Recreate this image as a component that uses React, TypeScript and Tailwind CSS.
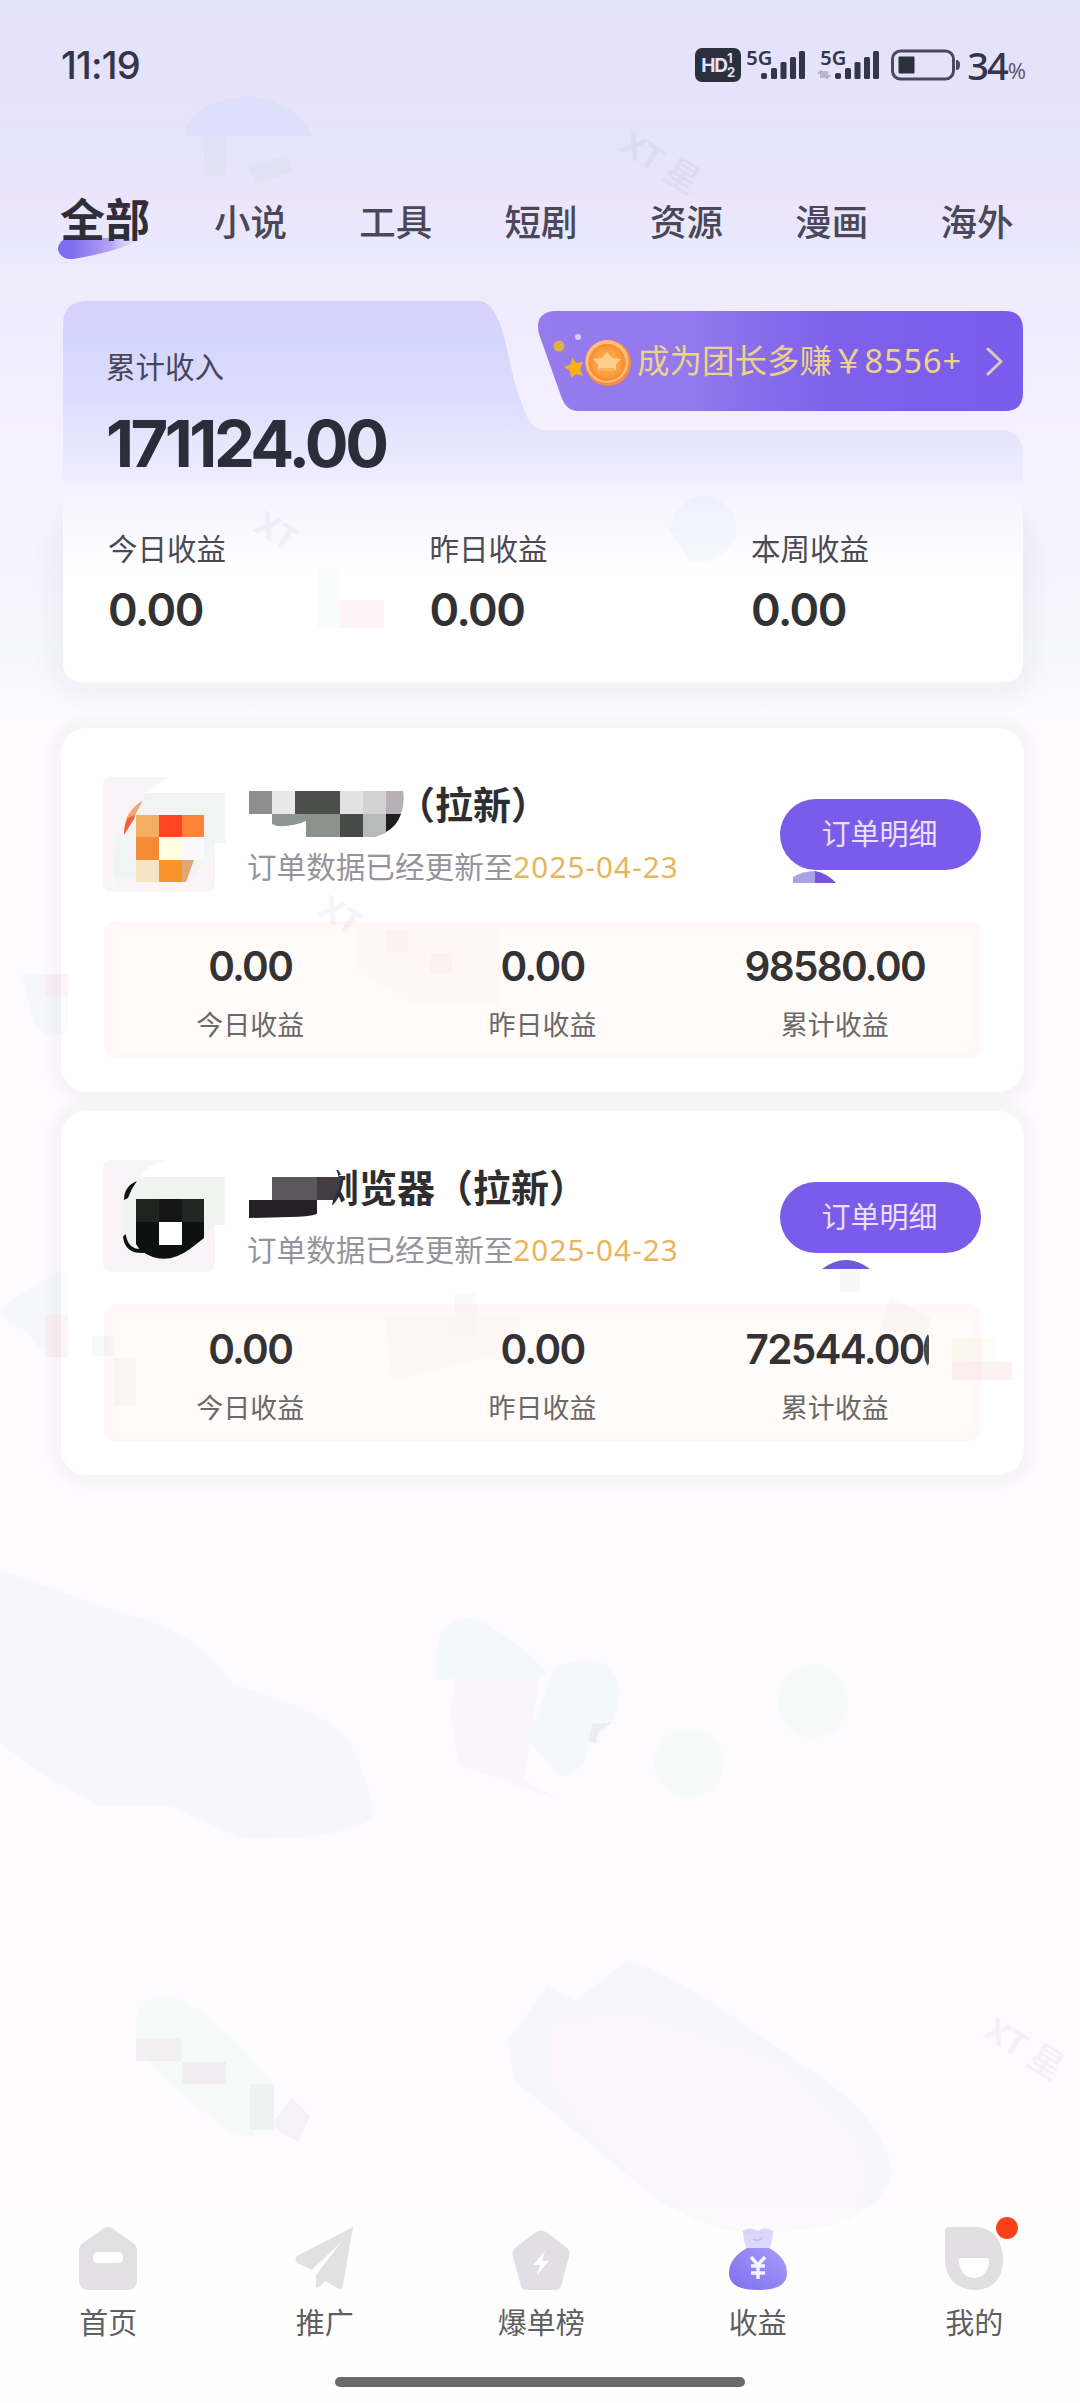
import type { ReactNode } from 'react';

interface Stat {
  label: string;
  value: string;
}

interface Order {
  id: string;
  title: string;
  updatedAt: string;
  avatar: ReactNode;
  mask: ReactNode;
  bubble: ReactNode;
  titleClass: string;
  cutDigit?: boolean;
  stats: Stat[];
}

const tabs = ['全部', '小说', '工具', '短剧', '资源', '漫画', '海外'];

const summary: Stat[] = [
  { label: '今日收益', value: '0.00' },
  { label: '昨日收益', value: '0.00' },
  { label: '本周收益', value: '0.00' },
];

function SignalBars() {
  return (
    <svg width="45" height="30" viewBox="0 0 45 30" fill="#34344a">
      <rect x="0" y="23" width="6" height="6" rx="2" />
      <rect x="10" y="18" width="6" height="11" rx="1.5" />
      <rect x="19.500" y="12" width="6" height="17" rx="1.500" />
      <rect x="29" y="7" width="6" height="22" rx="1.5" />
      <rect x="38" y="1" width="6" height="28" rx="1.5" />
    </svg>
  );
}

function StatusBar() {
  return (
    <div className="flex h-[130px] items-center justify-between pl-[61px] pr-[54px] text-[#34344a]">
      <span className="font-['Inter'] text-[38px] font-medium leading-none tracking-[-0.8px]">11:19</span>
      <div className="flex items-center">
        <div className="flex h-[34px] w-[46px] items-center justify-center rounded-[7px] bg-[#2c2f3d] font-['Inter'] text-[#e4e1fa]">
          <span className="text-[19px] font-bold leading-none tracking-[-1px]">HD</span>
          <span className="flex flex-col text-[13px] font-bold leading-[14px]">
            <span>1</span>
            <span>2</span>
          </span>
        </div>
        <div className="relative ml-[20px] h-[30px]">
          <span className="absolute -left-[15px] -top-[3px] font-['Noto_Sans'] text-[20px] font-semibold leading-[22px]">5G</span>
          <SignalBars />
        </div>
        <div className="relative ml-[29px] h-[30px]">
          <span className="absolute -left-[15px] -top-[3px] font-['Noto_Sans'] text-[20px] font-semibold leading-[22px]">5G</span>
          <svg className="absolute -left-[18px] top-[20px]" width="14" height="9" viewBox="0 0 14 9" fill="none" stroke="#aaa8bd" strokeWidth="1.5">
            <path d="M4 8V1L1 4M6 1v7M10 1v7l3-3M8 8V1" />
          </svg>
          <SignalBars />
        </div>
        <svg className="ml-[11px]" width="70" height="32" viewBox="0 0 70 32">
          <rect x="1.500" y="2" width="61" height="28" rx="8" fill="none" stroke="#4a4863" strokeWidth="3" />
          <rect x="7.500" y="7.500" width="16" height="17" rx="1" fill="#2c2f3d" />
          <path d="M65 11c3 0 4 2 4 5s-1 5-4 5z" fill="#4a4863" />
        </svg>
        <span className="ml-[6px] font-['Noto_Sans'] text-[38px] font-medium leading-none tracking-[-2px]">34</span>
        <span className="ml-[1px] mt-[10px] font-['Noto_Sans'] text-[22px] leading-none text-[#5d5b73]">%</span>
      </div>
    </div>
  );
}

function Tabs() {
  return (
    <nav className="relative flex h-[171px] items-start pl-[60px] pt-[62px] text-[#4a4858]">
      <svg className="absolute left-[57px] top-[104px]" width="90" height="28" viewBox="0 0 90 28">
        <defs>
          <linearGradient id="swoosh" x1="0" x2="1">
            <stop offset="0.150" stopColor="#7f6cee" />
            <stop offset="0.6" stopColor="#b3a3f7" />
            <stop offset="1" stopColor="#e4defd" stopOpacity="0" />
          </linearGradient>
        </defs>
        <path d="M10 4H88Q60 18 16 25Q4 26 1 16Q0 8 10 4Z" fill="url(#swoosh)" />
      </svg>
      {tabs.map((tab, i) => (
        <button
          key={tab}
          className={
            i === 0
              ? 'relative w-[154px] shrink-0 text-left text-[45px] font-bold leading-[56px] text-[#2f2e38]'
              : 'w-[145.3px] shrink-0 pt-[2px] text-left text-[36.5px] font-medium leading-[56px]'
          }
        >
          {tab}
        </button>
      ))}
    </nav>
  );
}

function LeaderBanner() {
  return (
    <div className="absolute right-0 top-[10px] flex h-[100px] w-[485px] items-center pl-[15px]">
      <svg className="absolute inset-0" width="485" height="100" viewBox="0 0 485 100">
        <defs>
          <linearGradient id="banner" x1="0" x2="1">
            <stop offset="0" stopColor="#967bee" />
            <stop offset="0.3" stopColor="#9379ed" />
            <stop offset="0.6" stopColor="#7f61eb" />
            <stop offset="1" stopColor="#7a5bed" />
          </linearGradient>
        </defs>
        <path d="M16 0H467Q485 0 485 18V82Q485 100 467 100H40Q28 100 23 85L1 23Q-4 2 16 0Z" fill="url(#banner)" />
      </svg>
      <svg className="relative" width="79" height="60" viewBox="-1 0 79 60">
        <defs>
          <radialGradient id="coin">
            <stop offset="0" stopColor="#ffb347" />
            <stop offset="0.7" stopColor="#fb9f43" />
            <stop offset="1" stopColor="#f78a33" />
          </radialGradient>
        </defs>
        <circle cx="5" cy="15" r="5.500" fill="#e0b347" />
        <circle cx="24" cy="6" r="3" fill="#d9ccff" />
        <path d="M18 26l4 6 7-1-3 7 3 7-7-2-5 4-1-7-6-4 7-3z" fill="#f9b016" />
        <circle cx="54" cy="32" r="23" fill="#f58f3c" />
        <circle cx="53" cy="30.500" r="21.500" fill="#ffbd76" />
        <circle cx="53" cy="31.500" r="18.500" fill="url(#coin)" />
        <path d="M53 21l5 6 9 1-5 5v6H44v-6l-5-5 9-1z" fill="#ffcf8c" />
        <path d="M45 37h16v3H45z" fill="#fbb35c" />
      </svg>
      <span className="relative ml-[5px] whitespace-nowrap text-[32.500px] leading-none text-[#ecd389]">
        成为团长多赚￥<span className="tracking-[0.9px]">8556+</span>
      </span>
      <svg className="absolute right-[20px] top-[36px]" width="17" height="29" viewBox="0 0 17 29" fill="none" stroke="#ddc9be" strokeWidth="3" strokeLinecap="round" strokeLinejoin="round">
        <path d="M2 2L15 14.500L2 27" />
      </svg>
    </div>
  );
}

function SummaryCard() {
  return (
    <section className="relative ml-[63px] h-[381px] w-[960px]">
      <div className="absolute inset-x-0 bottom-0 top-[220px] rounded-[24px] shadow-[0_4px_16px_16px_rgba(120,115,120,0.05)]" />
      <svg className="absolute inset-0" width="960" height="381" viewBox="0 0 960 381">
        <defs>
          <linearGradient id="summary" x1="0" y1="0" x2="0" y2="1">
            <stop offset="0" stopColor="#d7d0fd" />
            <stop offset="0.100" stopColor="#d4d7fd" />
            <stop offset="0.260" stopColor="#dddcff" />
            <stop offset="0.350" stopColor="#e4e5fd" />
            <stop offset="0.470" stopColor="#f0ecff" />
            <stop offset="0.485" stopColor="#f5f2ff" />
            <stop offset="0.620" stopColor="#fbf9ff" />
            <stop offset="0.720" stopColor="#ffffff" />
          </linearGradient>
        </defs>
        <path
          d="M24 0H416Q426 0 434 16C446 42 446 72 460 106Q468 129 480 129H936Q960 129 960 153V361Q960 381 940 381H20Q0 381 0 361V24Q0 0 24 0Z"
          fill="url(#summary)"
        />
      </svg>
      <LeaderBanner />
      <div className="relative h-[206px] w-[440px] pl-[43px] pt-[46px]">
        <p className="text-[29.500px] leading-[40px] text-[#47465a]">累计收入</p>
        <p className="mt-[23px] font-['Inter'] text-[65px] font-bold leading-[68px] tracking-[-3.500px] text-[#2c2d38]">171124.00</p>
      </div>
      <div className="relative flex pl-[45px] pt-[22px]">
        {summary.map((s) => (
          <div key={s.label} className="w-[321.500px] shrink-0 last:w-auto">
            <p className="text-[29.500px] leading-[40px] text-[#4a4a52]">{s.label}</p>
            <p className="mt-[17px] font-['Inter'] text-[45px] font-semibold leading-[48px] tracking-[-1.500px] text-[#323235]">{s.value}</p>
          </div>
        ))}
      </div>
    </section>
  );
}

/* Pixelated covers over the partner icons and names */

function AvatarOrange() {
  return (
    <svg width="125" height="116" viewBox="0 0 125 116">
      <rect x="1" y="0" width="112" height="115" rx="8" fill="#f8f4f8" />
      <path d="M66 -1H114V16H44Z" fill="#ffffff" />
      <path d="M64 0L42 16L40 40L12 90L10 115" fill="none" stroke="#f5faf6" strokeWidth="3" />
      <path d="M44 16H123V66H112L92 100H12L14 62Z" fill="#f0f4f2" />
      <path d="M22 58Q21 38 40 24Q34 34 32 42Q27 50 22 58Z" fill="#f0643a" />
      <path d="M24 42Q30 29 40 25L33 38Z" fill="#f7a56d" />
      <rect x="34" y="38" width="23" height="23" fill="#f4ae5f" />
      <rect x="57" y="38" width="23" height="23" fill="#ff4520" />
      <rect x="80" y="38" width="22" height="23" fill="#ff8339" />
      <rect x="34" y="60" width="23" height="23" fill="#f58b36" />
      <rect x="57" y="60" width="23" height="23" fill="#fffde2" />
      <rect x="80" y="60" width="22" height="23" fill="#fbf9fb" />
      <rect x="34" y="83" width="23" height="22" fill="#f7e4c2" />
      <rect x="57" y="83" width="23" height="22" fill="#f8952a" />
      <path d="M80 83H92L84 105H80Z" fill="#dfa86c" />
    </svg>
  );
}

function AvatarBlack() {
  return (
    <svg width="125" height="116" viewBox="0 0 125 116">
      <rect x="1" y="0" width="112" height="112" rx="8" fill="#f8f4f7" />
      <path d="M66 -1H114V17H36Q44 6 66 -1Z" fill="#ffffff" />
      <path d="M36 17H123V65H112L102 78L60 102L22 80V40Z" fill="#f0f4f1" />
      <path d="M22 40Q22 26 35 21Q29 29 26 38Z" fill="#111312" />
      <path d="M23 76Q26 90 38 90L40 92Q24 92 22 77Z" fill="#111312" stroke="#111312" strokeWidth="2" />
      <path d="M34 39H102V78L88 89Q62 108 38 90L34 84Z" fill="#0d1110" />
      <rect x="34" y="39" width="23" height="23" fill="#20231f" />
      <rect x="57" y="39" width="23" height="23" fill="#171616" />
      <rect x="80" y="39" width="22" height="23" fill="#232724" />
      <rect x="57" y="62" width="23" height="23" fill="#ffffff" />
    </svg>
  );
}

function NameMaskLong() {
  return (
    <svg className="ml-[2px] mt-[14px] shrink-0" width="155" height="46" viewBox="0 0 155 46">
      <rect x="0" y="0" width="23" height="23" fill="#8e8e8f" />
      <rect x="23" y="0" width="23" height="23" fill="#e9e8e9" />
      <rect x="46" y="0" width="45" height="23" fill="#4b4e4a" />
      <rect x="91" y="0" width="23" height="23" fill="#e2e2e2" />
      <rect x="114" y="0" width="23" height="23" fill="#d2d2d2" />
      <path d="M137 0H154Q156 12 152 23H137Z" fill="#b6b0b5" />
      <path d="M23 23H57V30Q44 36 28 35L23 33Z" fill="#8d978f" />
      <rect x="57" y="23" width="34" height="23" fill="#8c938f" />
      <rect x="91" y="23" width="23" height="23" fill="#484a47" />
      <path d="M114 23H137V42L126 46H114Z" fill="#b9bbba" />
      <path d="M137 23H152Q148 35 137 41Z" fill="#1e1e20" />
    </svg>
  );
}

function NameMaskShort() {
  return (
    <svg className="relative z-10 ml-[2px] mt-[11px] shrink-0" width="92" height="52" viewBox="0 -5 92 52">
      <path d="M68 24H84L80 47H68Z" fill="#ffffff" />
      <path d="M68 -5H88L90 3H68Z" fill="#ffffff" />
      <rect x="23" y="1" width="45" height="23" fill="#5b585b" />
      <path d="M68 1H92L90 12L84 24H68Z" fill="#443c42" />
      <path d="M0 24H68V38Q60 41 40 41L0 42Z" fill="#242024" />
    </svg>
  );
}

const orders: Order[] = [
  {
    id: 'a',
    title: '（拉新）',
    updatedAt: '2025-04-23',
    avatar: <AvatarOrange />,
    mask: <NameMaskLong />,
    titleClass: '-ml-[7px]',
    bubble: (
      <svg className="absolute left-[13px] top-[72px]" width="44" height="13" viewBox="0 0 44 13">
        <path d="M0 12V6Q10 0 22 0V12Z" fill="#ada1e6" />
        <path d="M22 0Q34 2 43 12H22Z" fill="#7356dc" />
      </svg>
    ),
    stats: [
      { label: '今日收益', value: '0.00' },
      { label: '昨日收益', value: '0.00' },
      { label: '累计收益', value: '98580.00' },
    ],
  },
  {
    id: 'b',
    title: '浏览器（拉新）',
    updatedAt: '2025-04-23',
    avatar: <AvatarBlack />,
    mask: <NameMaskShort />,
    titleClass: '-ml-[20px]',
    bubble: (
      <svg className="absolute left-[42px] top-[78px]" width="48" height="10" viewBox="0 0 48 10">
        <path d="M0 9Q12 0 24 0T48 9Z" fill="#6f5ad4" />
      </svg>
    ),
    cutDigit: true,
    stats: [
      { label: '今日收益', value: '0.00' },
      { label: '昨日收益', value: '0.00' },
      { label: '累计收益', value: '72544.00' },
    ],
  },
];

function OrderCard({ order }: { order: Order }) {
  return (
    <section className="h-[364px] w-[963px] rounded-[26px] bg-white pl-[41px] pt-[49px] shadow-[0_0_10px_11px_rgba(110,110,110,0.04)]">
      <div className="flex h-[143px]">
        <div className="w-[145px]">{order.avatar}</div>
        <div className="flex-1">
          <div className="flex h-[62px]">
            {order.mask}
            <h2 className={`${order.titleClass} whitespace-nowrap text-[38px] font-bold leading-[55px] text-[#2e2e30]`}>{order.title}</h2>
          </div>
          <p className="mt-[8px] whitespace-nowrap text-[29.600px] leading-[40px] text-[#96949a]">
            订单数据已经更新至<span className="tracking-[1.100px] text-[#e9b45c]">{order.updatedAt}</span>
          </p>
        </div>
        <div className="relative mr-[43px] mt-[22px]">
          <button className="h-[71px] w-[201px] rounded-full bg-[#7b5bea] pb-[2px] pr-[2px] text-[29px] leading-none text-[#e9e0fd]">订单明细</button>
          {order.bubble}
        </div>
      </div>
      <div className="ml-[2px] mt-px flex h-[137px] w-[877px] rounded-[12px] bg-[#fffbf8] pt-[24px] shadow-[inset_0_0_8px_6px_#fef8f7]">
        {order.stats.map((s) => (
          <div key={s.label} className="flex w-[292.300px] flex-col items-center">
            <div className="relative font-['Inter'] text-[40.500px] font-semibold leading-[44px] tracking-[-1.700px] text-[#343234]">
              {s.value}
              {order.cutDigit && s.label === '累计收益' && (
                <svg className="absolute -right-[6px] top-[6px]" width="8" height="33" viewBox="0 0 8 33">
                  <path d="M6 0Q1 6 2 17Q2 27 6 32L7 28V3Z" fill="#4c494b" />
                </svg>
              )}
            </div>
            <p className="mt-[16px] text-[27px] leading-[40px] text-[#6b686a]">{s.label}</p>
          </div>
        ))}
      </div>
    </section>
  );
}

function Watermarks() {
  return (
    <svg className="pointer-events-none absolute inset-0 z-20 opacity-60 mix-blend-multiply" width="1080" height="2403" viewBox="0 0 1080 2403">
      <g fill="#e9e6ef" fontFamily="'Noto Sans','Noto Sans CJK SC',sans-serif" fontSize="34" fontWeight="700" opacity="0.7">
        <text transform="translate(618 150) rotate(32)">XT 星</text>
        <text transform="translate(982 2036) rotate(32)">XT 星</text>
        <text transform="translate(316 914) rotate(32)">XT</text>
        <text transform="translate(252 530) rotate(32)">XT</text>
      </g>
      <path d="M184 136Q190 100 250 96Q300 104 312 136Z" fill="#f2f8ff" />
      <path d="M204 136h22v40h-22zM248 166l40-10 4 16-36 12z" fill="#f5faf7" />
      <path d="M318 588h22v12h44v28h-66z" fill="#fdedf1" />
      <rect x="318" y="568" width="22" height="60" fill="#f7f8f9" />
      <path d="M670 530Q680 492 710 496Q740 506 736 540Q716 566 690 562Z" fill="#f2f8fc" />
      <path d="M358 930L500 930L500 1006H416L356 970Z" fill="#fffafb" />
      <rect x="386" y="930" width="22" height="22" fill="#faf1f2" />
      <rect x="430" y="953" width="22" height="20" fill="#faf2f2" />
      <path d="M22 974H68V1030Q50 1044 34 1024Z" fill="#f3f9f5" />
      <rect x="45" y="974" width="23" height="23" fill="#f9ebef" />
      <path d="M0 1308L56 1272L68 1272V1352L40 1350Q30 1330 8 1322Z" fill="#f4faf6" />
      <rect x="45" y="1314" width="23" height="43" fill="#faebef" />
      <path d="M114 1358h22v48h-22zM92 1336h22v20h-22z" fill="#f3f5f5" />
      <path d="M384 1314H520V1350L392 1380Z" fill="#fef9fa" />
      <rect x="455" y="1293" width="22" height="42" fill="#f6f6f7" />
      <rect x="840" y="1270" width="20" height="22" fill="#f5f4f5" />
      <path d="M880 1330l10-34 40 22-4 18z" fill="#f8f5f6" />
      <rect x="952" y="1338" width="44" height="24" fill="#fbfaf0" />
      <rect x="952" y="1362" width="60" height="18" fill="#fae9ed" />
      <path d="M0 1570L116 1611Q200 1630 232 1684Q320 1710 346 1736Q380 1800 370 1820Q330 1842 240 1838L170 1806H100Q30 1770 0 1742Z" fill="#f7fafa" />
      <path d="M436 1650Q440 1616 474 1618Q520 1640 548 1674L436 1680Z" fill="#f4fcf7" />
      <path d="M456 1676L540 1674L524 1780L560 1800L458 1765L450 1710Z" fill="#f8f9f9" />
      <path d="M554 1668Q610 1644 620 1690Q618 1730 590 1740Q586 1776 560 1776L528 1740Z" fill="#f3fbf7" />
      <path d="M592 1724l20-2-14 10-2 12-8-4z" fill="#e6e6ea" />
      <ellipse cx="689" cy="1763" rx="35" ry="34" fill="#f3fdf6" />
      <ellipse cx="813" cy="1701" rx="35" ry="37" fill="#f3fdf6" />
      <path d="M136 2020Q140 1996 168 1996Q200 2000 274 2084Q274 2136 240 2136Q210 2124 136 2050Z" fill="#f4fdf6" />
      <rect x="136" y="2038" width="45" height="23" fill="#ececec" />
      <rect x="182" y="2062" width="44" height="22" fill="#e9e9e9" />
      <rect x="250" y="2084" width="24" height="46" fill="#e6f0ea" />
      <path d="M276 2118l16-20 18 18-12 26-24-14z" fill="#f1f0f2" />
      <path d="M508 2040L548 1986L576 2000L628 1960Q680 1975 800 2064Q880 2110 892 2170Q886 2212 820 2228L752 2234Q700 2230 650 2194L514 2080Z" fill="#f7fafa" />
      <path d="M552 2020L640 2014L780 2060L850 2130Q880 2180 850 2220L750 2234L650 2194L552 2090Z" fill="#fcf8fb" />
    </svg>
  );
}

const navItems: { label: string; icon: ReactNode; dot?: boolean }[] = [
  {
    label: '首页',
    icon: (
      <path
        fillRule="evenodd"
        d="M26 1Q30 -1 34 1L55 16Q59 19 59 23V52Q59 63 49 63H11Q1 63 1 52V23Q1 19 5 16ZM19 25Q15 25 15 31Q15 36 19 36H41Q45 36 45 31Q45 25 41 25Z"
        fill="#e2e0e3"
      />
    ),
  },
  {
    label: '推广',
    icon: (
      <path d="M58 0L2 29Q-2 33 4 37L17 43L47 14L21 48V60Q23 62 30 54L44 62Q48 63 48 58Z" fill="#e2e0e2" />
    ),
  },
  {
    label: '爆单榜',
    icon: (
      <>
        <path d="M25 5Q30 2 35 5L55 20Q60 24 58 30L50 59Q49 63 44 63H16Q11 63 10 59L2 30Q0 25 5 20Z" fill="#e1dfe3" />
        <path d="M34 24L22 38H29L26 48L38 34H31Z" fill="#ffffff" />
      </>
    ),
  },
  {
    label: '收益',
    icon: (
      <>
        <path d="M15 4Q23 -1 30 4Q37 -1 45 4Q45 14 41 22H19Q15 14 15 4Z" fill="#dcd7fc" />
        <path d="M25 12q6 3 10-2" stroke="#c6bff8" strokeWidth="2" fill="none" />
        <path d="M19 21H41Q59 31 59 46Q59 63 30 63Q1 63 1 46Q1 31 19 21Z" fill="url(#bag)" />
        <path d="M23 30L30 38L37 30M30 38V52M23 39H37M23 46H37" stroke="#f4f2ff" strokeWidth="3.500" fill="none" />
      </>
    ),
  },
  {
    label: '我的',
    dot: true,
    icon: (
      <>
        <path d="M5 0H34Q59 4 59 34Q57 63 30 63Q2 61 1 32V5Q1 0 5 0Z" fill="#e1dfe1" />
        <path d="M18 31H42Q46 31 45 36Q42 51 30 51Q18 51 15 36Q14 31 18 31Z" fill="#ffffff" />
      </>
    ),
  },
];

function BottomNav() {
  return (
    <footer className="mt-auto flex h-[195px] flex-col items-center bg-[#fefefe]">
      <div className="flex w-full pt-[19px]">
        {navItems.map((item) => (
          <div key={item.label} className="flex w-[216.500px] shrink-0 flex-col items-center">
            <div className="relative">
              <svg width="60" height="64" viewBox="0 0 60 64">
                <defs>
                  <linearGradient id="bag" x1="0" y1="1" x2="1" y2="0">
                    <stop offset="0" stopColor="#7b70f0" />
                    <stop offset="1" stopColor="#a79cf6" />
                  </linearGradient>
                </defs>
                {item.icon}
              </svg>
              {item.dot && <span className="absolute -right-[14px] -top-[10px] h-[22px] w-[22px] rounded-full bg-[#fb4119]" />}
            </div>
            <span className="mt-[12px] text-[29px] leading-[40px] text-[#5f5e61]">{item.label}</span>
          </div>
        ))}
      </div>
      <div className="mt-[34px] h-[10px] w-[410px] rounded-full bg-[#6a6a6a]" />
    </footer>
  );
}

export default function App() {
  return (
    <div className="relative flex h-[2403px] w-[1080px] flex-col overflow-hidden bg-[#fdfbfe] bg-[linear-gradient(180deg,#e4e1fa_0px,#e6e3fb_115px,#e4e5fb_150px,#eae4fb_190px,#ede5fc_205px,#e8e8fe_240px,#edeafd_265px,#eeebf7_285px,#efecfe_310px,#f4f0fe_430px,#f5f4fe_550px,#f7f7ff_650px,#fdfbfe_720px)] font-['Noto_Sans','Noto_Sans_CJK_SC',sans-serif]">
      <StatusBar />
      <Tabs />
      <SummaryCard />
      <div className="ml-[61px] mt-[46px] flex flex-col gap-[19px]">
        {orders.map((order) => (
          <OrderCard key={order.id} order={order} />
        ))}
      </div>
      <BottomNav />
      <Watermarks />
    </div>
  );
}
